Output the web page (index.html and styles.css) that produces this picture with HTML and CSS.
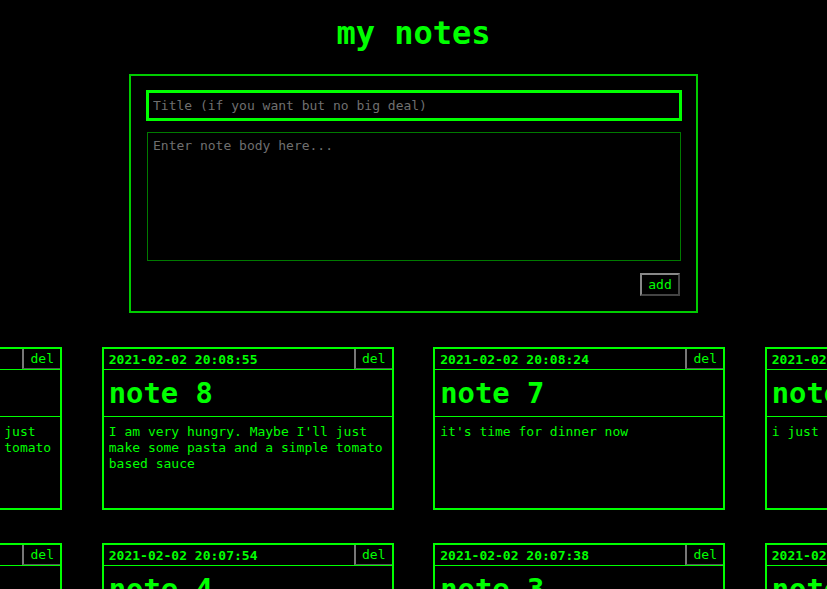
FILE: index.html
```html
<!DOCTYPE html>
<html lang="en">
<head>
<meta charset="utf-8">
<title>my notes</title>
<link rel="stylesheet" href="styles.css">
</head>
<body>
<h1 class="page-title">my notes</h1>
<form class="note-form">
  <input class="title-input" type="text" placeholder="Title (if you want but no big deal)" autofocus>
  <textarea class="body-input" placeholder="Enter note body here..."></textarea>
  <div class="form-actions"><button type="button" class="add-btn">add</button></div>
</form>
<div class="notes">
  <div class="note">
    <div class="note-head"><span class="note-date">2021-02-02 20:09:12</span><button class="del-btn">del</button></div>
    <div class="note-title">note 9</div>
    <div class="note-body">I am very hungry. Maybe I'll just make some pasta and a simple tomato based sauce</div>
  </div>
  <div class="note">
    <div class="note-head"><span class="note-date">2021-02-02 20:08:55</span><button class="del-btn">del</button></div>
    <div class="note-title">note 8</div>
    <div class="note-body">I am very hungry. Maybe I'll just make some pasta and a simple tomato based sauce</div>
  </div>
  <div class="note">
    <div class="note-head"><span class="note-date">2021-02-02 20:08:24</span><button class="del-btn">del</button></div>
    <div class="note-title">note 7</div>
    <div class="note-body">it's time for dinner now</div>
  </div>
  <div class="note">
    <div class="note-head"><span class="note-date">2021-02-02 20:08:10</span><button class="del-btn">del</button></div>
    <div class="note-title">note 6</div>
    <div class="note-body">i just had lunch</div>
  </div>
  <div class="note">
    <div class="note-head"><span class="note-date">2021-02-02 20:08:01</span><button class="del-btn">del</button></div>
    <div class="note-title">note 5</div>
    <div class="note-body">another note</div>
  </div>
  <div class="note">
    <div class="note-head"><span class="note-date">2021-02-02 20:07:54</span><button class="del-btn">del</button></div>
    <div class="note-title">note 4</div>
    <div class="note-body">this is note four</div>
  </div>
  <div class="note">
    <div class="note-head"><span class="note-date">2021-02-02 20:07:38</span><button class="del-btn">del</button></div>
    <div class="note-title">note 3</div>
    <div class="note-body">this is note three</div>
  </div>
  <div class="note">
    <div class="note-head"><span class="note-date">2021-02-02 20:07:20</span><button class="del-btn">del</button></div>
    <div class="note-title">note 2</div>
    <div class="note-body">this is note two</div>
  </div>
</div>
</body>
</html>
```
FILE: styles.css
```css
html, body {
  margin: 0;
  padding: 0;
  background: #000;
  overflow: hidden;
}
body {
  font-family: "DejaVu Sans Mono", monospace;
  color: #00ff00;
}
.page-title {
  margin: 15px 0 0;
  font-size: 32px;
  font-weight: bold;
  line-height: 37px;
  text-align: center;
  color: #00ff00;
}
.note-form {
  box-sizing: border-box;
  width: 569px;
  margin: 22px auto 0;
  border: 2px solid #00cc00;
  padding: 15px 15px 15px 16px;
  display: flex;
  flex-direction: column;
}
.title-input {
  box-sizing: border-box;
  width: 534px;
  height: 29px;
  margin: 0;
  background: #000;
  border: 2px solid #00ff00;
  outline: 1px solid #00ff00;
  padding: 0 4px;
  font-family: "DejaVu Sans Mono", monospace;
  font-size: 13px;
  color: #00ff00;
  caret-color: #00ff00;
}
.title-input:focus {
  outline: 1px solid #00ff00;
}
.title-input::placeholder,
.body-input::placeholder {
  color: #6f6f6f;
}
.body-input {
  box-sizing: border-box;
  width: 534px;
  height: 129px;
  margin: 12px 0 0;
  background: #000;
  border: 1px solid #007a00;
  padding: 5px 5px;
  resize: none;
  font-family: "DejaVu Sans Mono", monospace;
  font-size: 13px;
  line-height: 16px;
  color: #00ff00;
}
.form-actions {
  display: flex;
  justify-content: flex-end;
  margin-top: 12px;
  padding-right: 1px;
}
.add-btn {
  box-sizing: border-box;
  width: 40px;
  height: 23px;
  padding: 0;
  background: #000;
  border: 2px solid;
  border-color: #888 #444 #444 #888;
  font-family: "DejaVu Sans Mono", monospace;
  font-size: 13px;
  color: #00ff00;
}
.notes {
  display: grid;
  grid-template-columns: repeat(4, 292px);
  justify-content: center;
  column-gap: 39.5px;
  row-gap: 33px;
  margin-top: 34px;
}
.note {
  box-sizing: border-box;
  height: 163px;
  border: 2px solid #00ff00;
  display: flex;
  flex-direction: column;
}
.note-head {
  display: flex;
  align-items: stretch;
  height: 20px;
  border-bottom: 1px solid #00ff00;
}
.note-date {
  flex: 1;
  padding-left: 5px;
  font-size: 13px;
  font-weight: bold;
  line-height: 21px;
}
.del-btn {
  box-sizing: border-box;
  width: 38px;
  height: 20px;
  padding: 0;
  background: #000;
  border: none;
  border-left: 2px solid #777;
  border-bottom: 1px solid #555;
  font-family: "DejaVu Sans Mono", monospace;
  font-size: 13px;
  line-height: 18px;
  color: #00ff00;
}
.note-title {
  height: 46px;
  border-bottom: 1px solid #00ff00;
  padding-left: 5px;
  font-size: 28.8px;
  font-weight: bold;
  line-height: 47px;
  white-space: nowrap;
  overflow: hidden;
}
.note-body {
  flex: 1;
  padding: 7px 5px;
  font-size: 13px;
  line-height: 16px;
  overflow: hidden;
}
```
